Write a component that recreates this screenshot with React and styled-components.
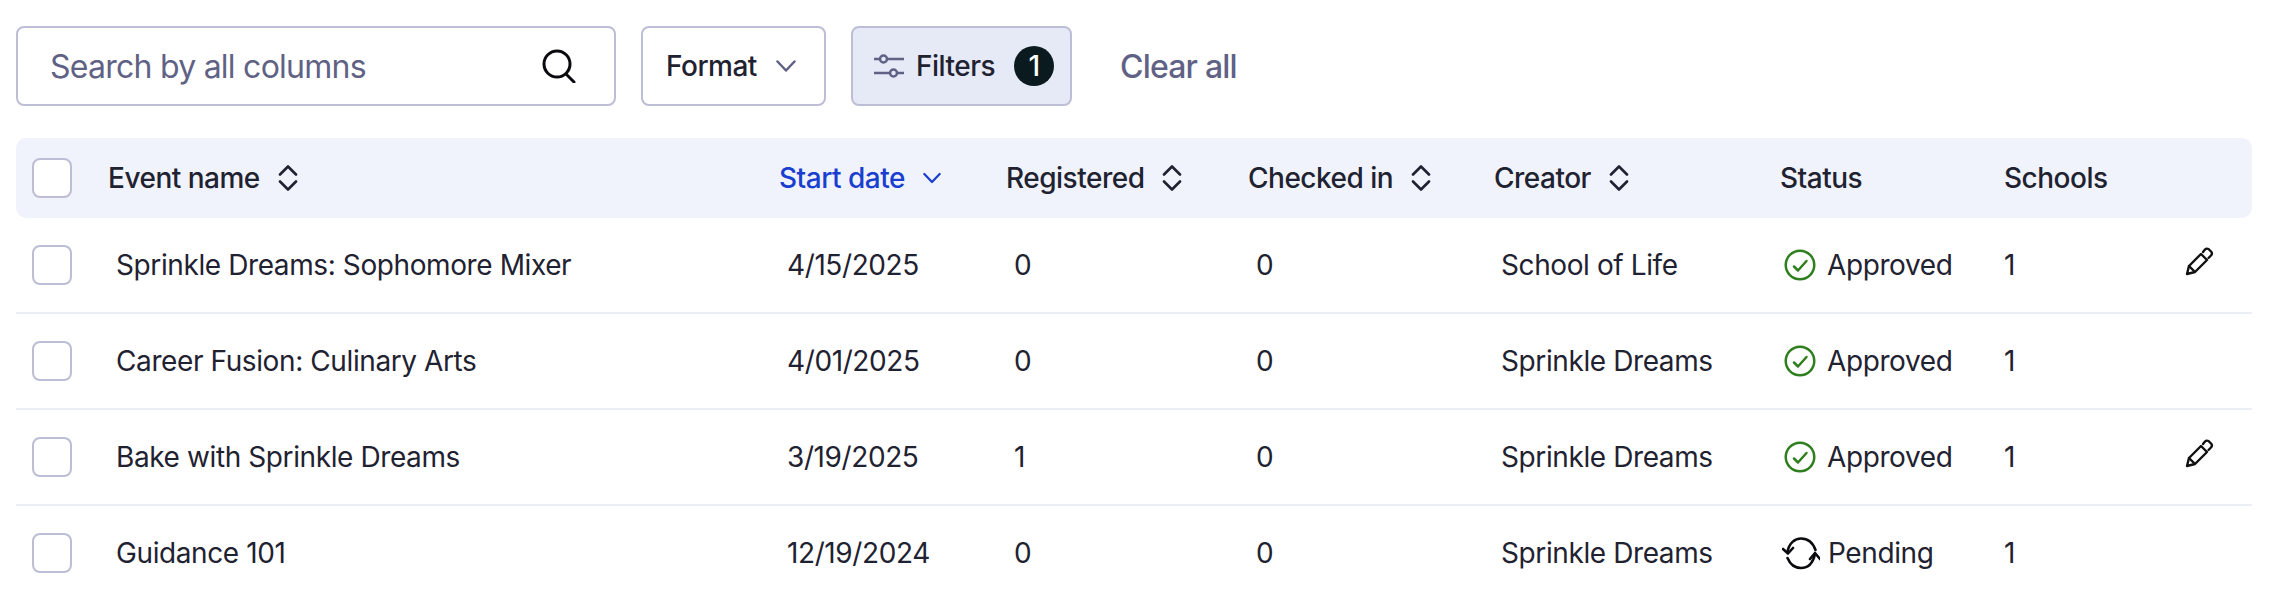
import React from "react";
import styled, { createGlobalStyle } from "styled-components";

const Global = createGlobalStyle`
  html, body { margin: 0; padding: 0; background: #fff; height: 600px; overflow: hidden; }
  * { box-sizing: border-box; }
  body { font-family: Inter, "Noto Sans", "Liberation Sans", sans-serif; color: #1f2231; }
`;

const Page = styled.div`
  padding: 26px 20px 0 16px;
  width: 2272px;
`;

const Toolbar = styled.div`
  display: flex;
  align-items: center;
  height: 80px;
  gap: 25px;
`;

const SearchBox = styled.label`
  width: 600px;
  height: 80px;
  display: flex;
  align-items: center;
  padding: 0 38px 0 32px;
  border: 2px solid #bdbed6;
  border-radius: 8px;
  background: #fff;
`;

const SearchInput = styled.input`
  flex: 1;
  min-width: 0;
  border: 0;
  outline: 0;
  padding: 0;
  background: transparent;
  font: 400 32px Inter, sans-serif;
  letter-spacing: -0.75px;
  &::placeholder { color: #5f6285; opacity: 1; }
`;

const ToolButton = styled.button`
  height: 80px;
  width: ${(p) => p.$width}px;
  display: flex;
  align-items: center;
  justify-content: flex-start;
  padding: 0 0 0 ${(p) => p.$pad}px;
  border: 2px solid #bdbed6;
  border-radius: 8px;
  background: ${(p) => (p.$active ? "#e6e9f6" : "#fff")};
  color: #1f2231;
  font: 500 28px Inter, sans-serif;
  letter-spacing: -0.5px;
  gap: ${(p) => p.$gap}px;
`;

const Badge = styled.span`
  width: 40px;
  height: 40px;
  border-radius: 50%;
  background: #0a1a1e;
  color: #fff;
  display: flex;
  align-items: center;
  justify-content: center;
  font: 500 28px Inter, sans-serif;
  margin-left: 7px;
`;

const ClearAll = styled.button`
  border: 0;
  background: none;
  padding: 0;
  margin-left: 23px;
  color: #5f6285;
  font: 500 32px Inter, sans-serif;
  letter-spacing: -0.8px;
`;

const TEMPLATE = "84px 671px 227px 242px 246px 286px 224px 256px";

const HeaderRow = styled.div`
  margin-top: 32px;
  height: 80px;
  display: grid;
  grid-template-columns: ${TEMPLATE};
  align-items: center;
  background: #f0f3fb;
  border-radius: 10px;
`;

const Row = styled.div`
  height: 96px;
  display: grid;
  grid-template-columns: ${TEMPLATE};
  align-items: center;
  border-bottom: 2px solid ${(p) => (p.$last ? "transparent" : "#ebeef4")};
`;

const CheckCell = styled.div`
  padding-left: 16px;
  display: flex;
`;

const Check = styled.span`
  display: block;
  width: 40px;
  height: 40px;
  border: 2px solid #bdbed6;
  border-radius: 8px;
  background: #fff;
`;

const HeadCell = styled.div`
  display: flex;
  align-items: center;
  padding-left: 8px;
  gap: 18px;
  font: 500 28px Inter, sans-serif;
  letter-spacing: -0.5px;
  color: ${(p) => (p.$sorted ? "#1a3fcf" : "#1f2231")};
`;

const Cell = styled.div`
  padding-left: ${(p) => p.$pad ?? 16}px;
  font: 400 28px Inter, sans-serif;
  letter-spacing: -0.4px;
  color: #1f2231;
`;

const StatusCell = styled.div`
  display: flex;
  align-items: center;
  padding-left: ${(p) => (p.$pending ? 10 : 12)}px;
  gap: ${(p) => (p.$pending ? 8 : 11)}px;
  font: 400 28px Inter, sans-serif;
  letter-spacing: -0.4px;
`;

const EditCell = styled.div`
  display: grid;
  grid-template-columns: 1fr auto;
  align-items: center;
  padding: 0 38px 0 8px;
  font: 400 28px Inter, sans-serif;
`;

const PencilIcon = () => (
  <svg width="30" height="30" viewBox="0 0 30 30" fill="none" stroke="#111" strokeWidth="2.4" strokeLinejoin="round" strokeLinecap="round" style={{ marginTop: -8 }}>
    <path d="M3 28 L5 20 L17 8 L23 14 L11 26 Z" />
    <path d="M5 20 L10 25" />
    <path d="M19 6 L21 3.5 Q22.5 2 24.5 3 L27.5 6 Q28.5 8 27 9.5 L24.5 12" />
  </svg>
);

const SearchIcon = () => (
  <svg width="34" height="34" viewBox="0 0 34 34" fill="none" stroke="#0b0b0f" strokeWidth="3" strokeLinecap="round">
    <circle cx="15" cy="15" r="13" />
    <path d="M24 25 L32 33" />
  </svg>
);

const Chevron = ({ color = "#5f6285", w = 20 }) => (
  <svg width={w} height="12" viewBox="0 0 20 12" fill="none" stroke={color} strokeWidth="2.5" strokeLinecap="round" strokeLinejoin="round">
    <path d="M1.5 1.5 L10 10.5 L18.5 1.5" />
  </svg>
);

const SlidersIcon = () => (
  <svg width="30" height="24" viewBox="0 0 30 24" fill="none" stroke="#5f6285" strokeWidth="2.5">
    <path d="M0 5 H6 M13 5 H30 M0 19 H16 M23 19 H30" />
    <circle cx="9.5" cy="5" r="3.5" />
    <circle cx="19.5" cy="19" r="3.5" />
  </svg>
);

const SortIcon = () => (
  <svg width="20" height="26" viewBox="0 0 20 26" fill="none" stroke="#1f2231" strokeWidth="2.6" strokeLinecap="round" strokeLinejoin="round">
    <path d="M2 9.5 L10 1.5 L18 9.5" />
    <path d="M2 16.5 L10 24.5 L18 16.5" />
  </svg>
);

const ApprovedIcon = () => (
  <svg width="32" height="32" viewBox="0 0 32 32" fill="none" stroke="#2f7f1e" strokeWidth="2.5" strokeLinecap="round" strokeLinejoin="round">
    <circle cx="16" cy="16" r="14.25" />
    <path d="M10 17.5 L14 21.5 L22.5 12" />
  </svg>
);

const PendingIcon = () => (
  <svg width="38" height="33" viewBox="0 0 38 33" fill="none" stroke="#0b0b0f" strokeWidth="2.6" strokeLinecap="round" strokeLinejoin="round">
    <path d="M5.5 15 C7 6 13 1.5 19 1.5 C26 1.5 31 6 33.5 13" />
    <path d="M1 12 L6 16.5 L11 11" />
    <path d="M5.5 21 C8 27 13 31 19 31 C26 31 31 26 33 17" />
    <path d="M28 22 L33 16 L38 22" />
  </svg>
);

const columns = [
  { label: "Event name", sort: true },
  { label: "Start date", sorted: true },
  { label: "Registered", sort: true },
  { label: "Checked in", sort: true },
  { label: "Creator", sort: true },
  { label: "Status" },
  { label: "Schools" },
];

const rows = [
  { name: "Sprinkle Dreams: Sophomore Mixer", date: "4/15/2025", reg: 0, chk: 0, creator: "School of Life", status: "Approved", edit: true },
  { name: "Career Fusion: Culinary Arts", date: "4/01/2025", reg: 0, chk: 0, creator: "Sprinkle Dreams", status: "Approved" },
  { name: "Bake with Sprinkle Dreams", date: "3/19/2025", reg: 1, chk: 0, creator: "Sprinkle Dreams", status: "Approved", edit: true },
  { name: "Guidance 101", date: "12/19/2024", reg: 0, chk: 0, creator: "Sprinkle Dreams", status: "Pending" },
];

export default function App() {
  return (
    <Page>
      <Global />
      <Toolbar>
        <SearchBox>
          <SearchInput placeholder="Search by all columns" />
          <SearchIcon />
        </SearchBox>
        <ToolButton $width={185} $pad={23} $gap={19}>
          Format
          <Chevron />
        </ToolButton>
        <ToolButton $width={221} $pad={21} $gap={12} $active>
          <SlidersIcon />
          Filters
          <Badge>1</Badge>
        </ToolButton>
        <ClearAll>Clear all</ClearAll>
      </Toolbar>

      <HeaderRow>
        <CheckCell><Check /></CheckCell>
        {columns.map((c) => (
          <HeadCell key={c.label} $sorted={c.sorted}>
            {c.label}
            {c.sort && <SortIcon />}
            {c.sorted && <Chevron color="#1a3fcf" w={18} />}
          </HeadCell>
        ))}
      </HeaderRow>

      {rows.map((r, i) => (
        <Row key={r.name} $last={i === rows.length - 1}>
          <CheckCell><Check /></CheckCell>
          <Cell>{r.name}</Cell>
          <Cell>{r.date}</Cell>
          <Cell>{r.reg}</Cell>
          <Cell>{r.chk}</Cell>
          <Cell $pad={15}>{r.creator}</Cell>
          <StatusCell $pending={r.status === "Pending"}>
            {r.status === "Pending" ? <PendingIcon /> : <ApprovedIcon />}
            {r.status}
          </StatusCell>
          <EditCell>
            1
            {r.edit && <PencilIcon />}
          </EditCell>
        </Row>
      ))}
    </Page>
  );
}
